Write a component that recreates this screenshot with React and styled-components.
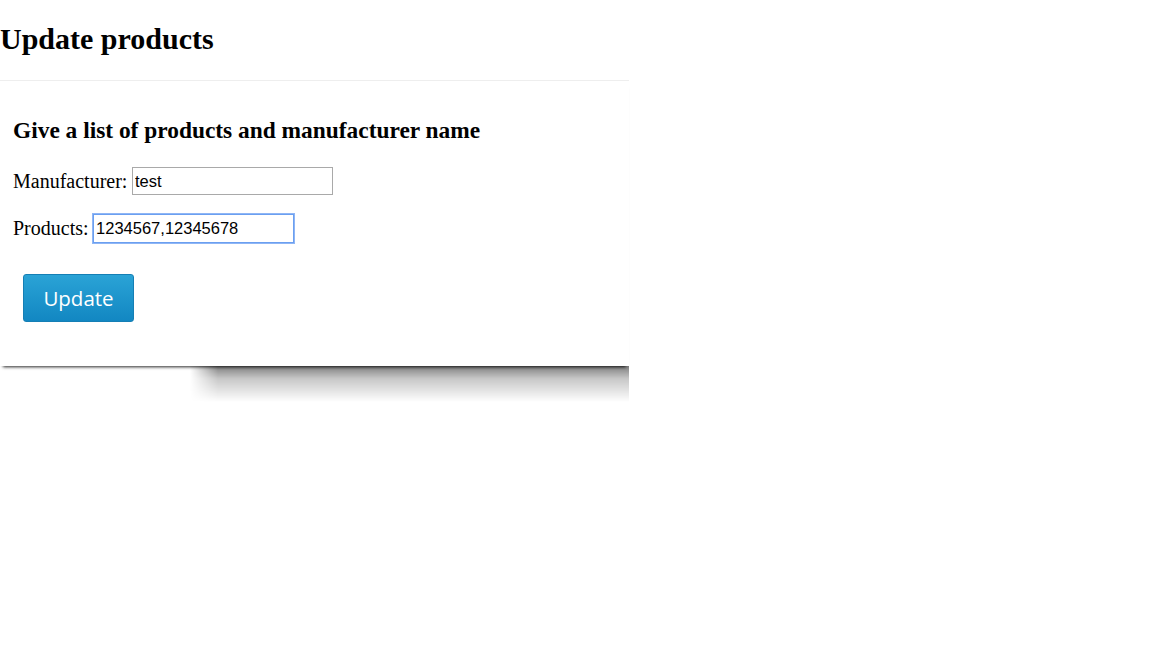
import React from "react";
import styled, { createGlobalStyle } from "styled-components";

const Global = createGlobalStyle`
  html, body { margin: 0; padding: 0; background: #fff; }
  body { font-family: "Liberation Serif", "Times New Roman", serif; color: #000; }
`;

const Page = styled.div`
  width: 629px;
  padding-bottom: 60px;
`;

const Title = styled.h1`
  margin: 22px 0 0;
  height: 58px;
  font-size: 30px;
  font-weight: bold;
  line-height: 34px;
  border-bottom: 1px solid #eeeeee;
`;

const Panel = styled.section`
  position: relative;
  padding: 36px 13px 44px;
  background: #fff;
  box-shadow: 0 4px 3px -3px rgba(0, 0, 0, 0.85);

  &::after {
    content: "";
    position: absolute;
    top: 100%;
    left: 190px;
    right: 0;
    height: 36px;
    background: linear-gradient(to bottom, rgba(0, 0, 0, 0.5), rgba(0, 0, 0, 0.22) 35%, rgba(0, 0, 0, 0));
    -webkit-mask-image: linear-gradient(to right, transparent, #000 28px);
    mask-image: linear-gradient(to right, transparent, #000 28px);
    pointer-events: none;
  }
`;

const Subtitle = styled.h3`
  margin: 0 0 24px;
  font-size: 23.4px;
  line-height: 26px;
  font-weight: bold;
`;

const Row = styled.div`
  display: flex;
  align-items: center;
  gap: 4.5px;
  height: 28px;
  margin-bottom: ${(p) => p.$gap || 0}px;
`;

const Label = styled.label`
  font-size: 20px;
  line-height: 22px;
`;

const Input = styled.input`
  box-sizing: border-box;
  width: 201px;
  height: ${(p) => (p.$focused ? 29 : 28)}px;
  margin: 0;
  padding: 0 2px;
  font-family: "Liberation Sans", Arial, sans-serif;
  font-size: 16.5px;
  color: #000;
  background: #fff;
  border: 1px solid ${(p) => (p.$focused ? "#6b9ff0" : "#a9a9a9")};
  outline: ${(p) => (p.$focused ? "1px solid #8fb6f5" : "none")};
  border-radius: 0;
`;

const Button = styled.button`
  display: block;
  box-sizing: border-box;
  margin: 1px 0 0 10px;
  width: 111px;
  height: 48px;
  padding: 0;
  font-family: "Open Sans", sans-serif;
  font-size: 20.5px;
  color: #fff;
  background: linear-gradient(to bottom, #2aa3d6, #1287c2);
  border: 1px solid #157fb5;
  border-radius: 3px;
  cursor: pointer;
`;

export default function App() {
  return (
    <Page>
      <Global />
      <Title>Update products</Title>
      <Panel>
        <Subtitle>Give a list of products and manufacturer name</Subtitle>
        <Row $gap={19}>
          <Label htmlFor="manufacturer">Manufacturer:</Label>
          <Input id="manufacturer" defaultValue="test" />
        </Row>
        <Row $gap={32}>
          <Label htmlFor="products">Products:</Label>
          <Input id="products" $focused defaultValue="1234567,12345678" />
        </Row>
        <Button type="button">Update</Button>
      </Panel>
    </Page>
  );
}
